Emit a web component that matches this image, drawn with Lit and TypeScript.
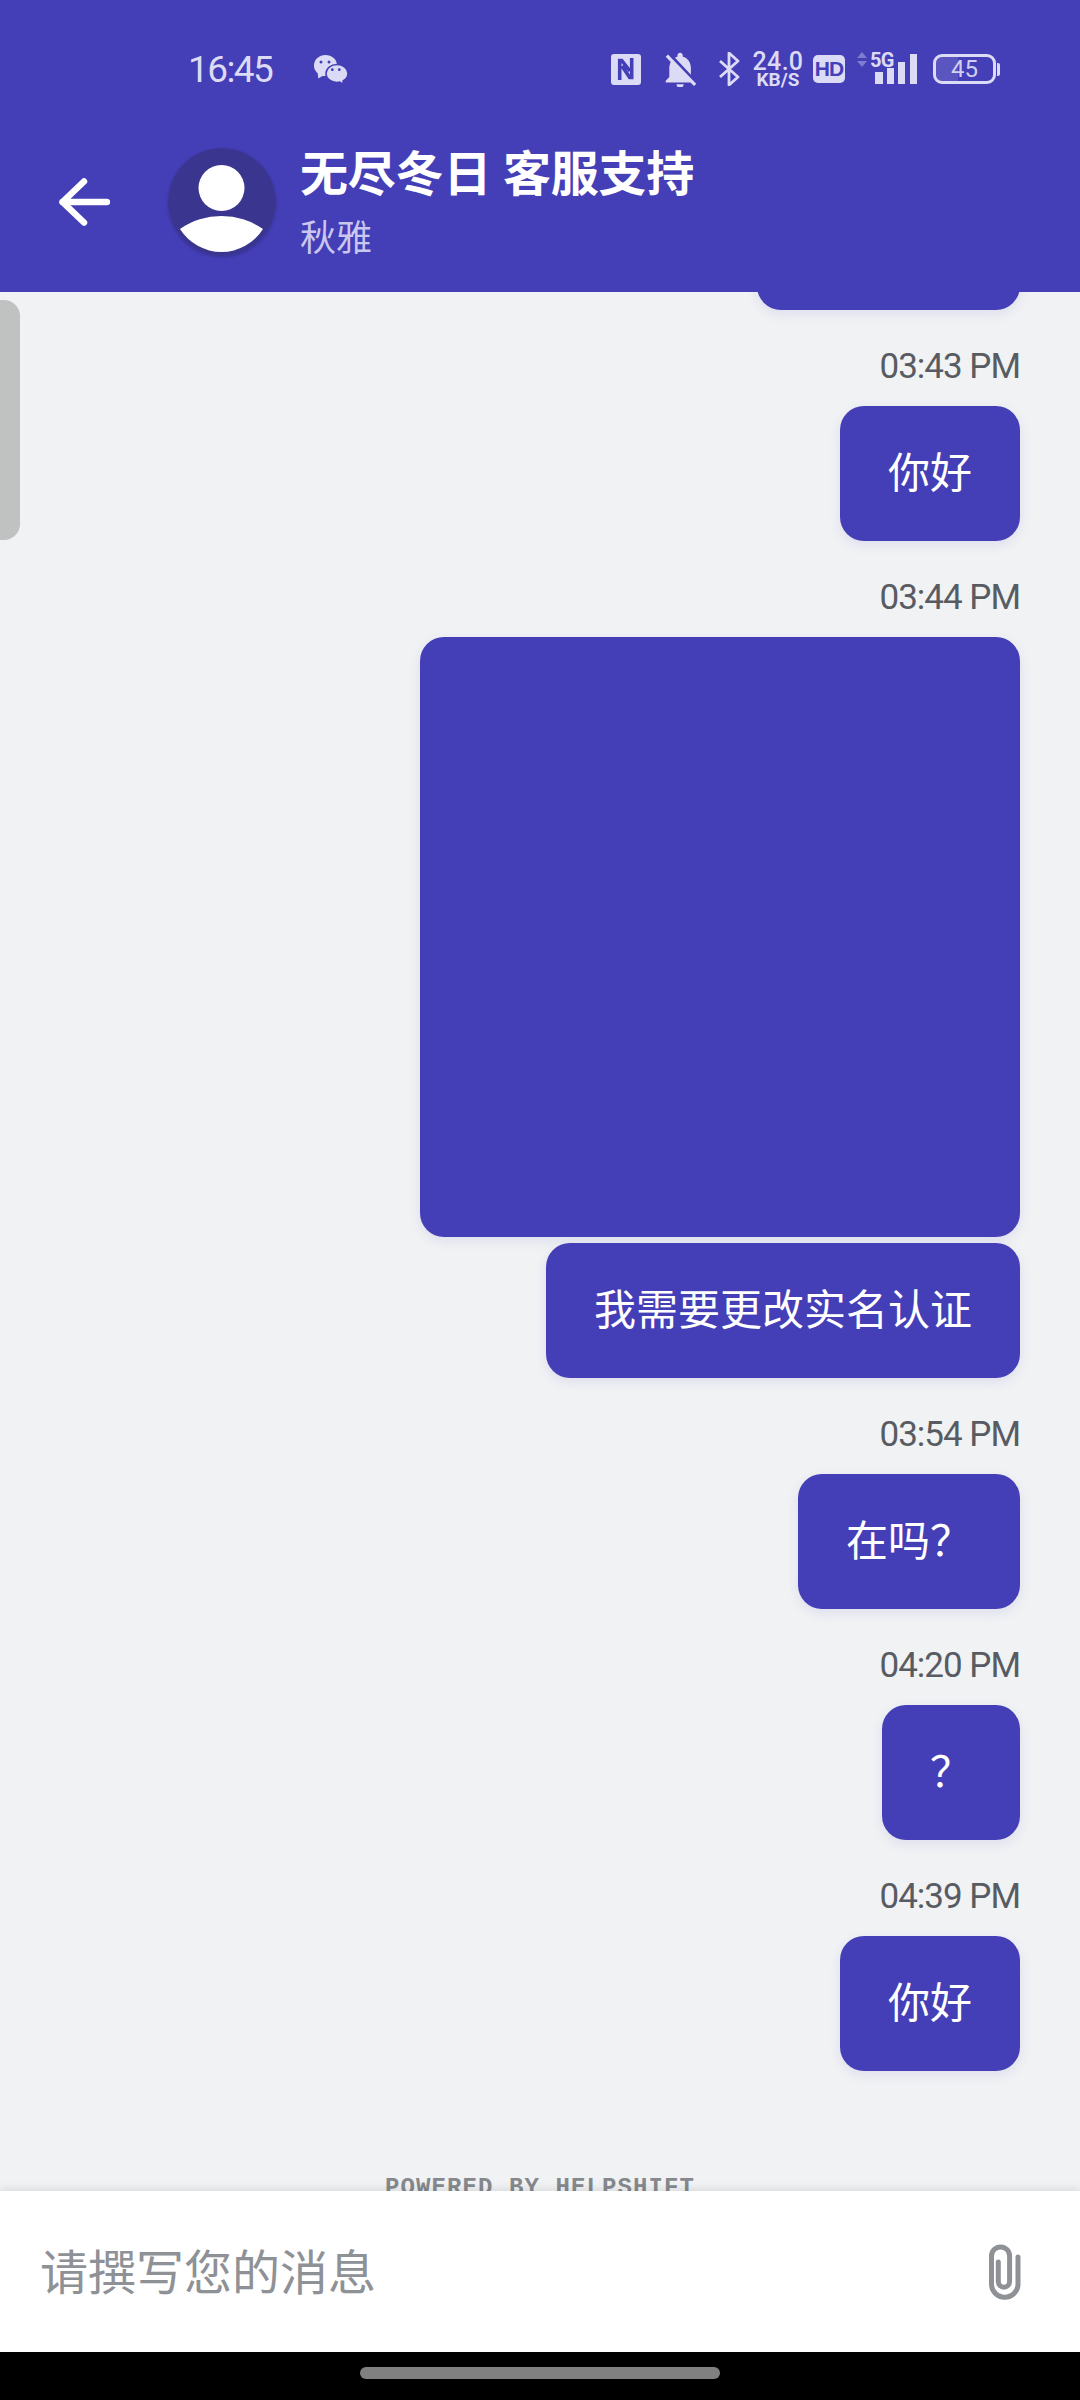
import { LitElement, html, css, svg } from "lit";
import { customElement } from "lit/decorators.js";

type Msg = { time?: string; text?: string; image?: boolean };

const MESSAGES: Msg[] = [
  { time: "03:43 PM", text: "你好" },
  { time: "03:44 PM", image: true },
  { text: "我需要更改实名认证" },
  { time: "03:54 PM", text: "在吗？" },
  { time: "04:20 PM", text: "？" },
  { time: "04:39 PM", text: "你好" },
];

const ICON = "#dcdbf5";
const BLUE = "#443eb7";

@customElement("app-root")
export class AppRoot extends LitElement {
  static styles = css`
    :host {
      display: block;
      width: 1080px;
      height: 2400px;
      font-family: Roboto, "Noto Sans CJK SC", sans-serif;
    }
    .page {
      height: 2400px;
      display: flex;
      flex-direction: column;
      background: #f0f2f4;
    }
    .top {
      height: 292px;
      flex: none;
      background: #443eb7;
      position: relative;
      z-index: 2;
    }
    .status {
      height: 46px;
      margin-top: 46px;
      display: flex;
      align-items: center;
      padding: 0 80px 0 188px;
      color: #dcdbf5;
    }
    .clock {
      font-size: 37px;
      width: 126px;
      letter-spacing: -1.6px;
    }
    .status-right {
      margin-left: auto;
      display: flex;
      align-items: center;
    }
    .speed {
      width: 50px;
      margin: 0 10px 0 13px;
      display: flex;
      flex-direction: column;
      align-items: center;
    }
    .speed b {
      font-size: 25px;
      line-height: 21px;
      font-weight: 500;
      letter-spacing: 0.3px;
    }
    .speed span {
      font-size: 19px;
      line-height: 15px;
      font-weight: 700;
    }
    .hd {
      width: 32px;
      height: 28px;
      border-radius: 5px;
      background: #dcdbf5;
      color: #443eb7;
      font: 700 21px/28px "Liberation Sans", sans-serif;
      letter-spacing: -0.8px;
      text-align: center;
      margin-right: 12px;
    }
    .battery {
      position: relative;
      width: 63px;
      height: 30px;
      box-sizing: border-box;
      margin-left: 11px;
      border: 3px solid #dcdbf5;
      border-radius: 9px;
      font-size: 24px;
      line-height: 24px;
      text-align: center;
      color: #cfcef0;
      overflow: hidden;
    }
    .battery i {
      position: absolute;
      left: 0;
      top: 0;
      bottom: 0;
      width: 22px;
      background: rgba(255, 255, 255, 0.12);
    }
    .cap {
      width: 3px;
      height: 13px;
      margin-left: 1px;
      border-radius: 0 2px 2px 0;
      background: #dcdbf5;
    }
    .bar {
      height: 180px;
      margin-top: 20px;
      display: flex;
      align-items: flex-start;
      padding-left: 59px;
    }
    .back {
      margin-top: 66px;
      margin-right: 58px;
      flex: none;
    }
    .avatar {
      width: 108px;
      height: 108px;
      margin-top: 36px;
      margin-right: 24px;
      flex: none;
      border-radius: 50%;
      box-shadow: 0 1px 3px rgba(0, 0, 0, 0.2);
    }
    .title {
      margin-top: 33px;
      font-size: 48px;
      line-height: 60px;
      font-weight: 700;
      letter-spacing: -0.2px;
      color: #fff;
      white-space: nowrap;
    }
    .sub {
      font-size: 36px;
      line-height: 68px;
      color: #c9c7ee;
    }
    .chat {
      flex: 1;
      min-height: 0;
      position: relative;
      overflow: hidden;
      display: flex;
      flex-direction: column;
      align-items: flex-end;
      padding: 0 60px;
    }
    .scroll {
      position: absolute;
      left: 0;
      top: 8px;
      width: 20px;
      height: 240px;
      background: #c0c2c2;
      border-radius: 0 16px 16px 0;
    }
    .time {
      flex: none;
      height: 96px;
      box-sizing: border-box;
      padding-top: 37px;
      font-size: 35px;
      line-height: 40px;
      letter-spacing: -1px;
      color: #585c62;
    }
    .bubble {
      flex: none;
      box-sizing: border-box;
      height: 135px;
      padding: 0 48px;
      border-radius: 24px;
      background: #443eb7;
      color: #fff;
      font-size: 42px;
      line-height: 135px;
      box-shadow: 0 4px 12px rgba(68, 62, 183, 0.1);
    }
    .clipped {
      width: 263px;
      margin-top: -117px;
    }
    .image {
      width: 600px;
      height: 600px;
      margin-bottom: 6px;
      padding: 0;
    }
    .powered {
      margin-top: 105px;
      width: 310px;
      flex: none;
      align-self: center;
      font: 700 24px/24px "Liberation Mono", monospace;
      letter-spacing: 1.1px;
      white-space: nowrap;
      color: #85888d;
    }
    .composer {
      height: 161px;
      flex: none;
      position: relative;
      z-index: 1;
      background: #fff;
      display: flex;
      align-items: center;
      padding: 0 58px 0 40px;
      box-shadow: 0 -2px 8px rgba(0, 0, 0, 0.1);
    }
    .placeholder {
      font-size: 48px;
      color: #8e9196;
      margin-top: -6px;
    }
    .clip {
      margin-left: auto;
    }
    .nav {
      height: 48px;
      flex: none;
      position: relative;
      z-index: 1;
      background: #000;
      display: flex;
      justify-content: center;
      padding-top: 15px;
      box-sizing: border-box;
    }
    .pill {
      width: 360px;
      height: 12px;
      border-radius: 6px;
      background: #808080;
    }
    .signal {
      margin-top: -6px;
    }
    .nfc {
      margin-right: 22px;
    }
    .bell {
      margin-right: 19px;
    }
  `;

  private statusIcons() {
    return html`
      <svg class="nfc" width="30" height="32" viewBox="0 0 30 32">
        <rect y="1" width="30" height="31" rx="3" fill=${ICON}></rect>
        <path d="M8.700 27V7.500h2L19 18M20.700 5v19.500h-2L11 13" fill="none" stroke=${BLUE} stroke-width="3.600"></path>
      </svg>
      <svg class="bell" width="36" height="36" viewBox="2.500 1.500 20 20">
        <path fill=${ICON} d="M20 18.690L7.840 6.140 5.270 3.490 4 4.760l2.800 2.800v.01c-.52.99-.8 2.160-.8 3.420v5l-2 2v1h13.730l2 2L21 19.720l-1-1.030zM12 22c1.110 0 2-.89 2-2h-4c0 1.110.89 2 2 2zm6-7.320V11c0-3.080-1.640-5.640-4.500-6.320V4c0-.83-.67-1.500-1.500-1.500s-1.500.67-1.500 1.500v.68c-.15.03-.29.08-.42.12-.1.03-.2.07-.3.11h-.01c-.2.08-.4.17-.59.27-.01 0-.01 0-.02.01L18 14.680z"></path>
      </svg>
      <svg width="22" height="34" viewBox="0 0 22 34">
        <path d="M2 9l18 16-9 8V1l9 8L2 25" fill="none" stroke=${ICON} stroke-width="2.800" stroke-linejoin="round"></path>
      </svg>
      <div class="speed"><b>24.0</b><span>KB/S</span></div>
      <div class="hd">HD</div>
      <svg class="signal" width="65" height="40" viewBox="0 -6 65 40">
        <path d="M5 0l5 6H0zM5 15l5-6H0z" fill=${ICON} opacity="0.4"></path>
        <text x="13" y="15" font-family="Roboto" font-weight="700" font-size="20" letter-spacing="-0.8" fill=${ICON}>5G</text>
        <rect x="18" y="20" width="8" height="12" fill=${ICON}></rect>
        <rect x="30" y="16" width="7" height="16" fill=${ICON}></rect>
        <rect x="41" y="10" width="7" height="22" fill=${ICON}></rect>
        <rect x="53" y="2" width="7" height="30" fill=${ICON}></rect>
      </svg>
      <div class="battery"><i></i>45</div>
      <div class="cap"></div>
    `;
  }

  private wechat() {
    return svg`
      <ellipse cx="11.500" cy="10.500" rx="11.500" ry="10.500" fill=${ICON}></ellipse>
      <path d="M3.500 16L4.300 23.500 11 19.500z" fill=${ICON}></path>
      <ellipse cx="23" cy="18.500" rx="11" ry="9" fill=${ICON} stroke=${BLUE} stroke-width="1.500"></ellipse>
      <path d="M25 25.500L28.300 28 28.500 23z" fill=${ICON}></path>
      <circle cx="7" cy="7" r="1.500" fill=${BLUE}></circle>
      <circle cx="15" cy="7" r="1.500" fill=${BLUE}></circle>
      <circle cx="18.300" cy="14.700" r="1.400" fill=${BLUE}></circle>
      <circle cx="25.300" cy="14.700" r="1.400" fill=${BLUE}></circle>
    `;
  }

  private message(m: Msg) {
    return html`
      ${m.time ? html`<div class="time">${m.time}</div>` : ""}
      ${m.image
        ? html`<div class="bubble image"></div>`
        : html`<div class="bubble">${m.text}</div>`}
    `;
  }

  render() {
    return html`
      <div class="page">
        <div class="top">
          <div class="status">
            <div class="clock">16:45</div>
            <svg width="35" height="29" viewBox="0 0 35 29">${this.wechat()}</svg>
            <div class="status-right">${this.statusIcons()}</div>
          </div>
          <div class="bar">
            <svg class="back" width="51" height="48" viewBox="0 0 51 48">
              <path d="M3.500 24H48M25 3.500L3.500 24 25 44.500" fill="none" stroke="#fff" stroke-width="6.500" stroke-linecap="round" stroke-linejoin="round"></path>
            </svg>
            <svg class="avatar" viewBox="0 0 108 108">
              <circle cx="54" cy="54" r="54" fill="#3a3690"></circle>
              <circle cx="53.500" cy="40" r="23" fill="#fff"></circle>
              <path d="M12 81A72.700 72.700 0 0 1 95 81A49 49 0 0 1 12 81Z" fill="#fff"></path>
            </svg>
            <div>
              <div class="title">无尽冬日 客服支持</div>
              <div class="sub">秋雅</div>
            </div>
          </div>
        </div>
        <div class="chat">
          <div class="bubble clipped"></div>
          ${MESSAGES.map((m) => this.message(m))}
          <div class="powered">POWERED BY HELPSHIFT</div>
          <div class="scroll"></div>
        </div>
        <div class="composer">
          <div class="placeholder">请撰写您的消息</div>
          <svg class="clip" width="34" height="56" viewBox="0 0 34 56">
            <path d="M30 13V40A13.250 13.250 0 0 1 3.500 40V12A9.050 9.050 0 0 1 21.600 12V37.500A5.650 5.650 0 0 1 10.300 37.500V18" fill="none" stroke="#8e9196" stroke-width="5" stroke-linecap="round"></path>
          </svg>
        </div>
        <div class="nav"><div class="pill"></div></div>
      </div>
    `;
  }
}
